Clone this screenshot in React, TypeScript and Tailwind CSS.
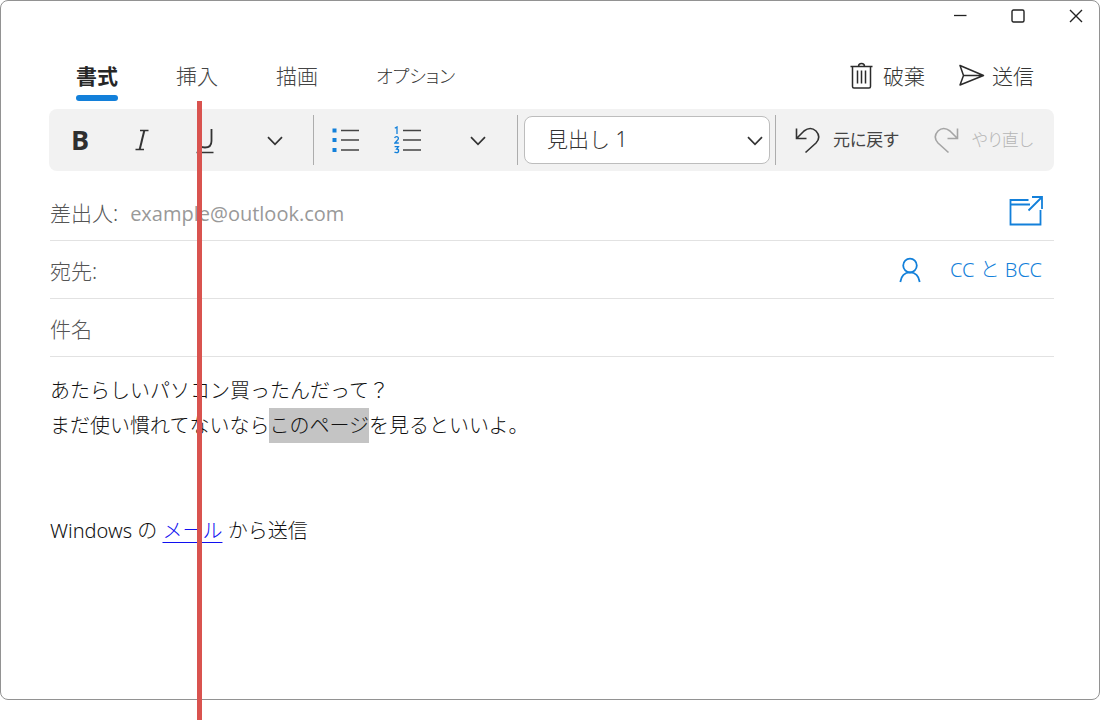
import React from 'react';

const uiFont = "font-['Noto_Sans','Noto_Sans_CJK_JP',sans-serif]";

function Chevron() {
  return (
    <svg width="16" height="12" viewBox="0 0 16 12" fill="none" stroke="#333" strokeWidth="1.7" aria-hidden="true">
      <path d="M1 3.200 8 10.400 15 3.200" />
    </svg>
  );
}

function Divider() {
  return <div className="h-[50px] w-px shrink-0 bg-[#adadad]" />;
}

function Tab({ label, active = false }: { label: string; active?: boolean }) {
  return (
    <button role="tab" aria-selected={active} className="flex flex-col gap-[5px]">
      <span className={active ? 'font-bold text-[#262626]' : 'font-light text-[#444]'}>{label}</span>
      <span className={active ? 'h-[6px] w-full rounded-full bg-[#1380da]' : 'h-[6px] w-full'} />
    </button>
  );
}

function TitleBar() {
  return (
    <div className="flex h-[30px] justify-end gap-3">
      <button aria-label="最小化" className="flex w-[46px] items-center justify-center">
        <svg width="14" height="14" viewBox="0 0 14 14" stroke="#222" strokeWidth="1.3" aria-hidden="true">
          <path d="M1 6.5h12.5" />
        </svg>
      </button>
      <button aria-label="最大化" className="flex w-[46px] items-center justify-center">
        <svg width="14" height="14" viewBox="0 0 14 14" fill="none" stroke="#222" strokeWidth="1.4" aria-hidden="true">
          <rect x="1" y="1" width="12" height="12" rx="1.5" />
        </svg>
      </button>
      <button aria-label="閉じる" className="flex w-[46px] items-center justify-center">
        <svg width="14" height="14" viewBox="0 0 14 14" stroke="#222" strokeWidth="1.4" aria-hidden="true">
          <path d="m1 1 12 12M13 1 1 13" />
        </svg>
      </button>
    </div>
  );
}

function Header() {
  return (
    <header className="flex items-start justify-between pt-[31px] pr-5 pb-2 pl-[27px] text-[21px] leading-7">
      <div role="tablist" className="flex items-start gap-[58px]">
        <Tab label="書式" active />
        <Tab label="挿入" />
        <Tab label="描画" />
        <button role="tab" aria-selected={false} className="text-lg leading-7 font-light text-[#333] [font-feature-settings:'palt']">
          オプション
        </button>
      </div>
      <div className="flex gap-[33px] font-light text-[#333]">
        <button className="flex items-center gap-[10px]">
          <svg width="23" height="28" viewBox="0 0 23 28" fill="none" stroke="#2b2b2b" strokeWidth="1.5" aria-hidden="true">
            <path d="M.5 4.5h22M2.5 4.5v20q0 1.5 1.5 1.5h15q1.500 0 1.500-1.500v-20M7.500 8.500v13M11.500 8.500v13M15.500 8.500v13M8.500 4.500q0-3 3-3t3 3" />
          </svg>
          破棄
        </button>
        <button className="flex items-center gap-[7px]">
          <svg width="27" height="28" viewBox="0 0 27 28" fill="none" stroke="#2b2b2b" strokeWidth="1.5" strokeLinejoin="round" aria-hidden="true">
            <path d="M2 3.500 25.500 13.500 2 23 5.500 13.500ZM5.500 13.500h20" />
          </svg>
          送信
        </button>
      </div>
    </header>
  );
}

function Toolbar() {
  return (
    <div role="toolbar" aria-label="書式" className="flex h-[62px] items-center rounded-lg bg-[#f2f2f2]">
      <button aria-label="太字" className="w-[62px] text-center font-['Open_Sans',sans-serif] text-[27px] leading-9 font-bold text-[#2f2f2f]">
        B
      </button>
      <button aria-label="斜体" className="flex w-[62px] justify-center">
        <svg width="14" height="24" viewBox="0 0 14 24" fill="none" stroke="#333" aria-hidden="true">
          <path d="M5 2.500h8.500M.5 21.500H9" strokeWidth="1.300" />
          <path d="M9.300 2.500 4.700 21.500" strokeWidth="2" />
        </svg>
      </button>
      <button aria-label="下線" className="flex w-[64px] justify-center">
        <svg width="18" height="28" viewBox="0 0 18 28" fill="none" stroke="#333" aria-hidden="true">
          <path d="M2.500 3v12q0 6.500 6.500 6.500t6.500-6.500V3" strokeWidth="1.800" />
          <path d="M.5 26.500h17" strokeWidth="1.500" />
        </svg>
      </button>
      <button aria-label="文字の書式" className="flex w-[76px] justify-center">
        <Chevron />
      </button>
      <Divider />
      <button aria-label="箇条書き" className="flex w-[62px] justify-center">
        <svg width="27" height="26" viewBox="0 0 27 26" aria-hidden="true">
          <path d="M.5 1.500h4v4h-4zM.5 11h4v4h-4zM.5 21h4v4h-4z" fill="#1380da" />
          <path d="M9 3.500h18M9 13h18M9 23h18" stroke="#444" strokeWidth="1.700" />
        </svg>
      </button>
      <button aria-label="番号付きリスト" className="flex w-[63px] justify-center">
        <svg width="27" height="28" viewBox="0 0 27 28" aria-hidden="true">
          <g fill="none" stroke="#1380da" strokeWidth="1.300">
            <path d="M.8 2.300 3 1v7" />
            <path d="M.6 12q.5-1.300 2-1.300 1.800 0 1.800 1.700 0 1-1.500 2.400L.8 17h4" />
            <path d="M.6 20.600h3.800L2.600 23q2 0 2 1.700 0 1.900-2.100 1.900-1.400 0-2-.6" />
          </g>
          <path d="M9 4.500h18M9 14h18M9 24h18" stroke="#444" strokeWidth="1.700" />
        </svg>
      </button>
      <button aria-label="段落の書式" className="flex w-[78px] justify-center">
        <Chevron />
      </button>
      <Divider />
      <div className="relative mr-[5px] ml-[6px] w-[246px] shrink-0">
        <select
          aria-label="スタイル"
          className="h-12 w-full appearance-none rounded-lg border border-[#bdbdbd] bg-white pl-[22px] text-[21px] font-light text-[#333]"
        >
          <option>見出し 1</option>
        </select>
        <span className="pointer-events-none absolute inset-y-0 right-[7px] flex items-center">
          <Chevron />
        </span>
      </div>
      <Divider />
      <button className="ml-[19px] flex items-center gap-[13px] text-[17px] text-[#444] [font-feature-settings:'palt']">
        <svg width="25" height="28" viewBox="0 0 25 28" fill="none" stroke="#333" strokeWidth="1.600" aria-hidden="true">
          <path d="M1.500 2.500v10h10M1.500 12.500 9 5q6.500-5 12 0 5.500 6 0 12L10.500 26.500" />
        </svg>
        元に戻す
      </button>
      <button
        disabled
        className="ml-[35px] flex items-center gap-[13px] text-[17px] font-light text-[#b5b5b5] [font-feature-settings:'palt']"
      >
        <svg width="25" height="28" viewBox="0 0 25 28" fill="none" stroke="#a5a5a5" strokeWidth="1.600" aria-hidden="true">
          <path d="M23.500 2.500v10h-10M23.500 12.500 16 5q-6.500-5-12 0-5.500 6 0 12l10.500 9.500" />
        </svg>
        やり直し
      </button>
    </div>
  );
}

function Fields() {
  const row = 'flex h-[58px] items-center border-b border-[#e2e2e2]';
  return (
    <div className="mt-3 pl-px text-[21px] font-light text-[#555]">
      <div className={row}>
        <label htmlFor="from" className="pt-1">
          差出人:
        </label>
        <input
          id="from"
          readOnly
          value="example@outlook.com"
          className="ml-3 min-w-0 flex-1 pt-1 font-['Open_Sans',sans-serif] text-xl font-normal text-[#999] outline-none"
        />
        <button aria-label="新しいウィンドウで開く" className="mr-[10px]">
          <svg width="36" height="34" viewBox="0 0 36 34" fill="none" stroke="#1380da" strokeWidth="1.800" aria-hidden="true">
            <path d="M20.500 5H2.500v24.500h30V15M2.500 9.500H22M24 2h10v12M34 2 20.500 15.500" />
          </svg>
        </button>
      </div>
      <div className={row}>
        <label htmlFor="to" className="pt-1">
          宛先:
        </label>
        <input id="to" className="ml-3 min-w-0 flex-1 pt-1 outline-none" />
        <button aria-label="連絡先" className="mr-[29px]">
          <svg width="22" height="26" viewBox="0 0 22 26" fill="none" stroke="#1380da" strokeWidth="1.800" aria-hidden="true">
            <circle cx="11" cy="8.500" r="6.800" />
            <path d="M1.300 25Q2.800 15.500 11 15.400q8.200.1 9.700 9.600" />
          </svg>
        </button>
        <button className="mr-3 text-xl text-[#1380da]">CC と BCC</button>
      </div>
      <div className={row}>
        <input
          aria-label="件名"
          placeholder="件名"
          className="min-w-0 flex-1 pt-1 outline-none placeholder:text-[#555]"
        />
      </div>
    </div>
  );
}

function MessageBody() {
  return (
    <div
      role="textbox"
      aria-multiline="true"
      aria-label="本文"
      contentEditable
      suppressContentEditableWarning
      spellCheck={false}
      className="pt-4 pl-px text-xl leading-[35px] font-light text-[#111] outline-none"
    >
      <p>あたらしいパソコン買ったんだって？</p>
      <p>
        まだ使い慣れてないなら<mark className="inline-block bg-[#c4c4c4] text-[#111]">このページ</mark>を見るといいよ。
      </p>
      <p className="mt-[70px]">
        Windows の{' '}
        <a href="#mail" className="text-[#1010f0] underline decoration-1 underline-offset-4">
          メール
        </a>{' '}
        から送信
      </p>
    </div>
  );
}

export default function App() {
  return (
    <div className={`relative flex min-h-screen flex-col bg-white pb-5 ${uiFont}`}>
      <main className="flex-1 rounded-lg border border-[#929292]">
        <TitleBar />
        <div className="pr-[45px] pl-12">
          <Header />
          <Toolbar />
          <Fields />
          <MessageBody />
        </div>
      </main>
      <div className="pointer-events-none absolute top-[101px] bottom-0 left-[197px] w-[5px] bg-[#d9534f]" />
    </div>
  );
}
